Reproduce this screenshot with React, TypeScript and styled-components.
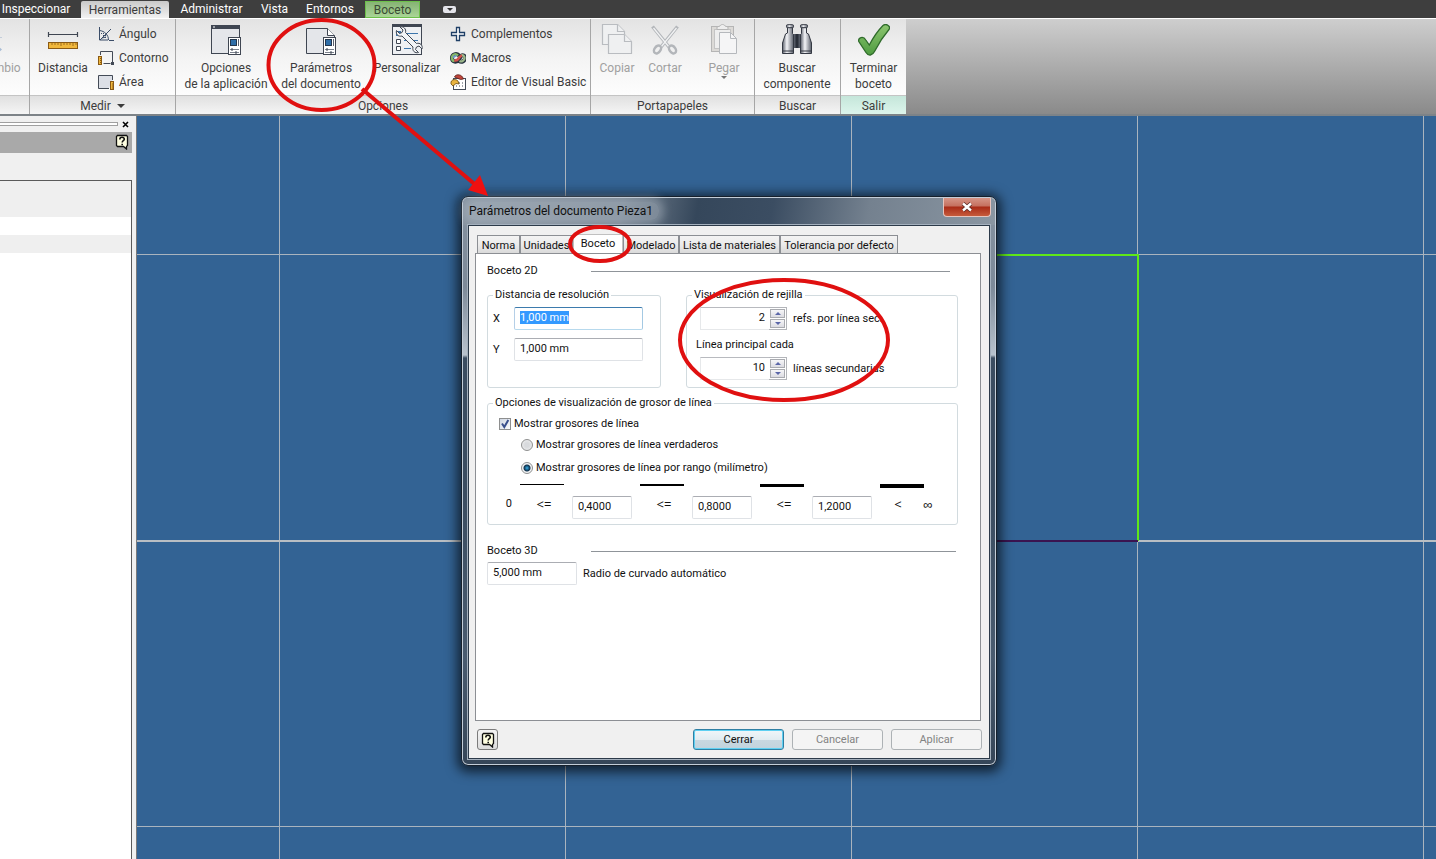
import React, { useEffect, useRef, useState } from "react";
import styled, { createGlobalStyle, css } from "styled-components";

const GlobalStyle = createGlobalStyle`
  * { box-sizing: border-box; }
  body { margin: 0; overflow: hidden; font: 12px/16px Roboto, "Open Sans", sans-serif; color: #3c3c3c; }
  button, input { font: inherit; color: inherit; margin: 0; }
  button { background: none; border: 0; padding: 0; }
`;

const Page = styled.div`
  position: relative;
  display: flex;
  flex-direction: column;
  min-height: 100vh;
  overflow: hidden;
`;

/* ---------- menu tabs ---------- */

const MenuBar = styled.nav`
  display: flex;
  align-items: flex-end;
  height: 18px;
  padding-right: 8px;
  background: #3e3e3e;
`;

const MenuTab = styled.button<{ $width: number; $look?: "active" | "context" | "first" }>`
  width: ${(p) => p.$width}px;
  height: 18px;
  padding-top: 1px;
  line-height: 17px;
  text-align: center;
  white-space: nowrap;
  color: #fff;
  ${(p) => p.$look === "first" && "padding-right: 9px;"}
  ${(p) =>
    p.$look === "active" &&
    css`
      height: 17px;
      color: #3c3c3c;
      border-radius: 2px 2px 0 0;
      background: linear-gradient(#c9c9c9, #f2f2f2);
    `}
  ${(p) =>
    p.$look === "context" &&
    css`
      height: 17px;
      color: #3a4a34;
      border: 1px solid #6cc04a;
      line-height: 15px;
      background: linear-gradient(#86b374, #a9d596);
    `}
`;

const MenuMore = styled.button`
  display: flex;
  align-items: center;
  justify-content: center;
  width: 13px;
  height: 7px;
  margin: 0 0 5px 23px;
  border-radius: 2px;
  background: #e4e4ea;
`;

/* ---------- ribbon ---------- */

const Ribbon = styled.div`
  display: flex;
  height: 98px;
  border-top: 1px solid #fff;
  border-bottom: 2px solid #7d8388;
  background: linear-gradient(#cecece, #8a8a8a);
`;

const Group = styled.section<{ $width: number }>`
  display: flex;
  flex-direction: column;
  flex: none;
  width: ${(p) => p.$width}px;
  border-right: 1px solid #a6a6a6;
  background: linear-gradient(#e3e3e3, #f4f4f4 40px, #fdfdfd 76px);
  overflow: hidden;
  &:last-child { border-right: 0; }
`;

const GroupBody = styled.div<{ $pad: number }>`
  display: flex;
  height: 76px;
  padding-left: ${(p) => p.$pad}px;
`;

const ClippedBody = styled.div`
  display: flex;
  justify-content: flex-end;
  width: 26px;
  height: 76px;
`;

const GroupTitle = styled.div<{ $green?: boolean }>`
  display: flex;
  align-items: center;
  justify-content: center;
  gap: 6px;
  height: 19px;
  padding-top: 2px;
  border-top: 1px solid #c4c4c4;
  background: ${(p) => (p.$green ? "linear-gradient(#c5e6da, #dcf5ec)" : "linear-gradient(#e0e0e0, #f5f5f5)")};
`;

const BigButton = styled.button<{ $width: number }>`
  display: flex;
  flex: none;
  flex-direction: column;
  align-items: center;
  gap: 4px;
  width: ${(p) => p.$width}px;
  padding-top: 5px;
  white-space: nowrap;
  text-align: center;
  &:disabled { color: #a0a0a0; }
  svg { flex: none; }
  span svg { display: block; margin: 0 auto; }
`;

const SmallList = styled.div<{ $gap: number }>`
  display: flex;
  flex-direction: column;
  padding-top: 3px;
  margin-left: ${(p) => p.$gap}px;
`;

const SmallButton = styled.button`
  display: flex;
  align-items: center;
  gap: 5px;
  height: 24px;
  white-space: nowrap;
`;

const Separator = styled.div`
  width: 1px;
  margin: 2px 0 2px 4px;
  background: #c2c2c2;
`;

/* ---------- workspace ---------- */

const Workspace = styled.main`
  display: flex;
  flex: 1;
`;

const Side = styled.aside`
  display: flex;
  flex: none;
  flex-direction: column;
  width: 137px;
  padding-right: 4px;
  border-right: 1px solid #7a7a7a;
  background: #f0f0f0;
`;

const SideGrip = styled.div`
  display: flex;
  align-items: center;
  justify-content: space-between;
  height: 16px;
  padding-right: 2px;
`;

const GripBar = styled.div`
  width: 118px;
  height: 4px;
  border: 1px solid #a0a0a0;
  border-left: 0;
  background: #fff;
`;

const SideClose = styled.button`
  display: flex;
  width: 9px;
  height: 9px;
`;

const SideTitle = styled.div`
  display: flex;
  align-items: center;
  justify-content: flex-end;
  height: 21px;
  padding: 0 3px 2px 0;
  background: #a9a9a9;
`;

const SideTree = styled.div`
  flex: 1;
  margin-top: 27px;
  border: 1px solid #5a5a5a;
  border-width: 1px 1px 0 0;
  background: linear-gradient(#efefef 36px, #fff 36px, #fff 54px, #efefef 54px, #efefef 72px, #fff 72px);
`;

const Canvas = styled.div`
  position: relative;
  flex: 1;
  background: #336394;
  overflow: hidden;
`;

const GridDrawing = styled.svg`
  display: block;
  width: 100%;
  height: 100%;
  position: absolute;
`;

/* ---------- dialog ---------- */

const Dialog = styled.section`
  position: absolute;
  left: 324px;
  top: 80px;
  display: flex;
  flex-direction: column;
  width: 536px;
  padding: 0 6px 6px;
  border: 1px solid #16202c;
  border-radius: 7px;
  color: #111;
  font-size: 11px;
  line-height: 14px;
  background: linear-gradient(#8592a0, #7d8a99 90px, #b8c2cd 158px, #3b4d61 161px, #3b4d61 300px, #4a5c70 460px, #364658);
  box-shadow: inset 0 0 0 1px #c3cdd8, 0 2px 12px 4px rgba(0, 0, 0, 0.65);
`;

const DialogTitle = styled.header`
  display: flex;
  align-items: flex-start;
  justify-content: space-between;
  height: 27px;
  margin: 1px -5px 0;
  padding: 0 4px 0 5px;
  border-radius: 5px 5px 0 0;
  background: linear-gradient(100deg, #8793a0, #74818f 30%, #35475b 44%, #3b4d62 58%, #74818f 76%, #8a96a2);
`;

const TitleText = styled.h1`
  margin: 4px 0 0;
  padding: 0 6px 0 1px;
  font-size: 12px;
  line-height: 18px;
  font-weight: 400;
  border-radius: 8px;
  background: rgba(185, 195, 204, 0.4);
  box-shadow: 0 0 8px 5px rgba(185, 195, 204, 0.4);
`;

const CloseButton = styled.button`
  display: flex;
  align-items: center;
  justify-content: center;
  width: 48px;
  height: 19px;
  border: 1px solid #e7c4bd;
  border-top: 0;
  border-radius: 0 0 4px 4px;
  background: linear-gradient(#d69587, #c5705f 8px, #a92b17 9px, #c65a3b);
`;

const Client = styled.div`
  display: flex;
  flex-direction: column;
  padding: 8px 7px 8px 6px;
  border: 1px solid #2c3a49;
  box-shadow: 0 0 0 1px #a4b0bd;
  background: #f0f0f0;
`;

const TabStrip = styled.div`
  display: flex;
  align-items: flex-end;
  height: 19px;
  padding-left: 2px;
`;

const Tab = styled.button<{ $width: number; $active?: boolean }>`
  flex: none;
  width: ${(p) => p.$width}px;
  height: 18px;
  padding-top: 2px;
  border: 1px solid #8c8f94;
  border-bottom: 0;
  white-space: nowrap;
  line-height: 16px;
  background: linear-gradient(#f3f3f3, #ebebeb 50%, #dadada);
  ${(p) =>
    p.$active &&
    css`
      height: 19px;
      padding: 0 0 1px;
      background: #fff;
      border-color: #c0c0c0;
    `}
`;

const TabPanel = styled.div`
  min-height: 468px;
  margin-right: 1px;
  padding: 9px 22px 0 11px;
  border: 1px solid #8c8f94;
  background: #fff;
`;

const SectionTitle = styled.h2<{ $end: number }>`
  display: grid;
  grid-template-columns: 104px 1fr;
  align-items: center;
  height: 16px;
  margin: 0;
  padding-right: ${(p) => p.$end}px;
  font-size: 11px;
  font-weight: 400;
  &::after {
    content: "";
    height: 1px;
    background: #8f9499;
  }
`;

const PairRow = styled.div`
  display: flex;
  gap: 25px;
  margin-top: 9px;
`;

const FieldGroup = styled.fieldset<{ $width?: number; $height: number }>`
  ${(p) => (p.$width ? `width: ${p.$width}px;` : "flex: 1;")}
  min-width: 0;
  height: ${(p) => p.$height}px;
  margin: 0;
  padding: 5px 5px 0;
  border: 1px solid #d2dbdf;
  border-radius: 3px;
  legend {
    height: 14px;
    margin-left: 0;
    padding: 0 2px;
  }
`;

const FieldRow = styled.div`
  display: grid;
  grid-template-columns: 21px 129px;
  align-items: center;
  margin-bottom: 8px;
`;

const TextBox = styled.input<{ $width: number; $focus?: boolean }>`
  width: ${(p) => p.$width}px;
  height: 23px;
  padding: 0 5px 2px;
  border: 1px solid #dfe2e6;
  border-top-color: #abadb3;
  border-radius: 2px;
  background: #fff;
  outline: 0;
  &::selection { color: #fff; background: #3399ff; }
  ${(p) => p.$focus && "border-color: #3d7bad #a4c9e3 #b7d9ed #b5cfe7;"}
`;

const SpinRow = styled.div`
  display: flex;
  align-items: center;
  gap: 6px;
  padding-left: 8px;
`;

const SpinBox = styled.div`
  display: flex;
  width: 87px;
  height: 23px;
`;

const SpinInput = styled.input`
  width: 69px;
  padding: 0 4px 2px;
  border: 1px solid #e6e8ea;
  border-top-color: #b8babf;
  border-right: 0;
  text-align: right;
  outline: 0;
`;

const SpinButtons = styled.div`
  display: flex;
  flex-direction: column;
  width: 18px;
  padding: 1px;
  gap: 1px;
  border: 1px solid #b3b5ba;
  border-left: 0;
  button {
    display: flex;
    flex: 1;
    align-items: center;
    justify-content: center;
    border: 1px solid #a9abb0;
    background: linear-gradient(#f6f6f8, #dcdce2);
  }
`;

const SpinCaption = styled.label`
  display: flex;
  align-items: center;
  height: 27px;
  padding: 2px 0 0 4px;
`;

const ChoiceRow = styled.label<{ $indent: number; $top: number }>`
  display: flex;
  align-items: center;
  gap: 3px;
  height: 16px;
  margin-top: ${(p) => p.$top}px;
  padding-left: ${(p) => p.$indent}px;
`;

const CheckInput = styled.input`
  appearance: none;
  width: 12px;
  height: 12px;
  border: 1px solid #8e8f8f;
  background: linear-gradient(135deg, #cfd6e2, #fafbfc);
  &:checked {
    background: url("data:image/svg+xml,%3Csvg xmlns='http://www.w3.org/2000/svg' viewBox='0 0 10 10'%3E%3Cpath d='M2 4.5L4.3 8L8.3 1' fill='none' stroke='%23394f8c' stroke-width='2'/%3E%3C/svg%3E"),
      linear-gradient(135deg, #cfd6e2, #fafbfc);
  }
`;

const RadioInput = styled.input`
  appearance: none;
  width: 12px;
  height: 12px;
  border: 1px solid #8e8f8f;
  border-radius: 50%;
  background: radial-gradient(circle, #d8dadd 30%, #f4f4f4);
  &:checked {
    background: radial-gradient(circle at 50% 50%, #3fb1e6 0, #14567f 2px, #16324a 3px, #f2f4f6 4px);
  }
`;

const Ranges = styled.div`
  display: flex;
  gap: 4px;
  margin-top: 8px;
`;

const RangeStart = styled.span`
  flex: none;
  width: 19px;
  padding-top: 12px;
  line-height: 16px;
  text-align: right;
`;

const RangeStep = styled.div<{ $last?: boolean }>`
  display: grid;
  flex: none;
  grid-template-columns: ${(p) => (p.$last ? "44px 16px" : "56px 60px")};
  grid-template-rows: 12px 23px;
  line-height: 16px;
  text-align: center;
`;

const RangeSign = styled.span`
  font-size: 13px;
  font-family: "Noto Sans", sans-serif;
`;

const Weight = styled.div<{ $size: number }>`
  grid-column: 1 / -1;
  width: 44px;
  height: ${(p) => p.$size}px;
  margin-left: 4px;
  background: #000;
`;

const RadiusRow = styled.div`
  display: flex;
  align-items: center;
  gap: 6px;
  margin-top: 3px;
`;

const Spacer = styled.div<{ $size: number }>`
  height: ${(p) => p.$size}px;
`;

const Footer = styled.footer`
  display: flex;
  gap: 8px;
  margin-top: 8px;
  padding-left: 2px;
`;

const HelpButton = styled.button`
  display: flex;
  align-items: center;
  justify-content: center;
  width: 21px;
  height: 21px;
  margin-right: auto;
  border: 1px solid #7b7b7b;
  border-radius: 3px;
  background: linear-gradient(#f4f4f4, #dcdcdc);
`;

const PushButton = styled.button<{ $default?: boolean }>`
  width: 91px;
  height: 21px;
  padding-top: 1px;
  border: 1px solid #adb2b5;
  border-radius: 3px;
  background: #f4f4f4;
  &:disabled { color: #838383; }
  ${(p) =>
    p.$default &&
    css`
      border-color: #2f7fa3;
      box-shadow: inset 0 0 0 1px #5fd0f2;
      background: linear-gradient(#f0f6f9, #e2ecf1 50%, #c8d8e1 50%, #c2d3dd);
    `}
`;

const Annotations = styled.svg`
  position: absolute;
  left: 0;
  top: 0;
  pointer-events: none;
`;

/* ---------- icons ---------- */

const Mini = ({ children }: { children: React.ReactNode }) => (
  <svg width="16" height="16" viewBox="0 0 16 16" fill="none">{children}</svg>
);
const Large = ({ children }: { children: React.ReactNode }) => (
  <svg width="32" height="32" viewBox="0 0 32 32" fill="none">{children}</svg>
);

const HelpGlyph = () => (
  <svg width="14" height="16" viewBox="0 0 14 16" fill="none">
    <path d="M2.5 1.5h9l1 1v9l-1 1v2.5l-3-2.5h-6l-1-1v-9z" fill="#ffffe1" stroke="#111" strokeWidth="1.3" />
    <path d="M4.8 5.5c0-3 4.7-2.8 4.5-.2C9.2 6.7 7.2 6.8 7.2 8.5M7.2 9.8v1.4" stroke="#111" strokeWidth="1.6" />
  </svg>
);

const IconDistance = () => (
  <Large>
    <path d="M1.5 8v5M30.5 8v5M2 10.5h28" stroke="#3f4652" strokeWidth="1.2" />
    <rect x="1.5" y="18.5" width="29" height="6" fill="#f0b73c" stroke="#8a5a14" />
    <path d="M5 19v2M8 19v2M11 19v2M14 19v3M17 19v2M20 19v2M23 19v2M26 19v3M29 19v2" stroke="#8a5a14" strokeWidth=".8" />
  </Large>
);
const IconAngle = () => (
  <Mini>
    <path d="M1.5 1v13H10M1.5 4.5C6.5 5 10.5 9 10.5 14M2 14L13 3" stroke="#3b4d68" />
    <path d="M11 14.5h5" stroke="#3b4d68" />
    <path d="M3.5 7v1M5.5 7v1M5.5 9v1M7.5 9v1M7.5 11v1M4 12l4-1" stroke="#3b4d68" />
  </Mini>
);
const IconContour = () => (
  <Mini>
    <path d="M2.5 5V1.5h12v12M5.5 13.5h7" stroke="#444b57" />
    <rect x="13" y="12" width="3" height="3" fill="#444b57" />
    <rect x=".5" y="6.5" width="3" height="8" fill="#f0b73c" stroke="#8a5a14" />
    <path d="M2 8.5h1.5M2 10.5h1.5M2 12.5h1.5" stroke="#8a5a14" />
  </Mini>
);
const IconArea = () => (
  <Mini>
    <path d="M11 14.5H.5V1.5h14V6" fill="#dcdfe6" stroke="#444b57" />
    <rect x="12.5" y="7.5" width="3" height="8" fill="#f0b73c" stroke="#8a5a14" />
    <path d="M14 10h1.5M14 12h1.5M14 14h1.5" stroke="#8a5a14" />
  </Mini>
);
const SettingsSheet = () => (
  <>
    <rect x="18.5" y="13.5" width="12" height="17" fill="#fff" stroke="#3f4652" />
    <rect x="20.5" y="15.5" width="6" height="6" fill="#2e6ea8" stroke="#23364d" />
    <path d="M28.5 15v7" stroke="#5b6370" />
    <path d="M20 25.5h9M20 28.5h9" stroke="#7a818c" />
    <path d="M22 24v3M26 27v3" stroke="#3f4652" />
  </>
);
const IconAppOptions = () => (
  <Large>
    <rect x="1.5" y="1.5" width="28" height="28" fill="#e4e6ea" stroke="#3f4652" />
    <path d="M1 3h29" stroke="#3f4652" strokeWidth="4" />
    <path d="M3 3h2" stroke="#fff" />
    <SettingsSheet />
  </Large>
);
const IconDocSettings = () => (
  <Large>
    <path d="M1.5 4.5h21l7 7v18h-28z" fill="#e4e6ea" stroke="#3f4652" />
    <path d="M22.5 4.5v7h7" fill="#fff" stroke="#3f4652" />
    <SettingsSheet />
  </Large>
);
const IconCustomize = () => (
  <Large>
    <rect x="1.5" y=".5" width="29" height="30" fill="#eef0f3" stroke="#3f4652" />
    <path d="M1 2h30" stroke="#3f4652" strokeWidth="2" />
    <rect x="5.5" y="7.5" width="4" height="4" fill="#3d76ad" stroke="#3d76ad" />
    <path d="M5.5 15.5h4v4h-4zM5.5 22.5h4v4h-4z" fill="#fff" stroke="#3f4652" />
    <path d="M13 9.5h14M13 16.5h14M13 24.5h7" stroke="#3d76ad" />
    <path
      d="M9 3l3 3-1 2.500-2.500 1-3-3c-1 4 2 6.500 5.500 5.500L22 23c-1 4 2 6.500 5.500 5.500l-3-3 1-2.500 2.500-1 3 3c1-4-2-6.500-5.500-5.500L14.500 8.500C15.500 5 12.500 2 9 3z"
      fill="#f2f4f6"
      stroke="#3f4652"
    />
  </Large>
);
const IconPlus = () => (
  <Mini><path d="M6.5 1.5h3v5h5v3h-5v5h-3v-5h-5v-3h5z" fill="#fff" stroke="#1f3f66" strokeWidth="1.3" /></Mini>
);
const IconMacros = () => (
  <Mini>
    <path d="M9 5.5C6.5 3 2 4 2 8s4.5 5 7 1.5L11 6c2-1.5 4-.5 4 2s-3 5-6 3" stroke="#26323f" strokeWidth="4" />
    <path d="M8 5.5C5.500 3 2 4.5 2 8c0 2 1 3 2.5 3" stroke="#86b86b" strokeWidth="2.4" />
    <path d="M11 5.5c2-1 3.5.5 3.5 2.5 0 3-3 4-5 3" stroke="#9db88b" strokeWidth="2.4" />
    <path d="M4.5 10c4 2 3.5-3.5 7.5-4.5" stroke="#d2504a" strokeWidth="2.6" />
    <path d="M3 7.5l3-2" stroke="#6d9bd0" strokeWidth="2" />
  </Mini>
);
const IconVba = () => (
  <Mini>
    <rect x="3.5" y="4.5" width="12" height="11" fill="#fff" stroke="#444b57" />
    <path d="M6 12h1M9 9h1M12 9h1M9 12h1M12 12h1" stroke="#444b57" />
    <path d="M4.5 3c1-3 6-3 8 0l1 2-3 .5z" fill="#c0453a" stroke="#5a1d18" strokeWidth=".8" />
    <path d="M1 8c1-3 5-3 7-1l1 3-3-.5L3 12 1 10z" fill="#e9b440" stroke="#6b4a10" strokeWidth=".8" />
  </Mini>
);
const IconCopy = () => (
  <Large>
    <g fill="#eff0f1" stroke="#b9bcc0" strokeWidth="1.2">
      <path d="M1.5.5h15l7 7v13h-22z" /><path d="M16.5.5v7h7" />
      <path d="M7.5 10.5h16l7 7v12h-23z" /><path d="M23.5 10.5v7h7" />
    </g>
  </Large>
);
const IconCut = () => (
  <Large>
    <path d="M3.5 2.5L20 23M28.5 2.5L12 23" stroke="#b3b6ba" strokeWidth="3.5" />
    <path d="M4.5 4L20 23M27.5 4L12 23" stroke="#f1f2f3" strokeWidth="1.3" />
    <g stroke="#b3b6ba" strokeWidth="2.5">
      <ellipse cx="8.5" cy="25.5" rx="3" ry="4.3" transform="rotate(38 8.5 25.5)" />
      <ellipse cx="23.5" cy="25.5" rx="3" ry="4.3" transform="rotate(-38 23.5 25.5)" />
    </g>
  </Large>
);
const IconPaste = () => (
  <Large>
    <rect x="3.5" y="2.5" width="22" height="25" fill="#dcdad7" stroke="#b5b5b5" />
    <rect x="6.5" y="5.5" width="16" height="19" fill="#eee" stroke="#c4c4c4" />
    <path d="M9 5.5V3l3-1c1-2 4-2 5 0l3 1v2.5z" fill="#eee" stroke="#b5b5b5" />
    <path d="M11.5 8.5h11l6 6v15h-17z" fill="#f5f5f6" stroke="#b5b8bc" />
    <path d="M22.5 8.5v6h6" stroke="#b5b8bc" />
  </Large>
);
const IconBinoculars = () => (
  <Large>
    <defs>
      <linearGradient id="steel"><stop stopColor="#5b606b" /><stop offset=".4" stopColor="#f4f5f8" /><stop offset="1" stopColor="#5b606b" /></linearGradient>
      <linearGradient id="hinge"><stop stopColor="#8a909c" /><stop offset=".5" stopColor="#20252f" /><stop offset="1" stopColor="#8a909c" /></linearGradient>
    </defs>
    <rect x="11" y="10" width="10" height="14" fill="url(#hinge)" />
    <g fill="url(#steel)" stroke="#343943">
      <path d="M6.5 3.5h5v6l1 1v19h-11V19l3-9 2-1z" /><path d="M20.5 3.5h5V9l2 1 3 9v10.5h-11v-19l1-1z" />
      <rect x="5.5" y=".7" width="7" height="3" rx="1" /><rect x="19.5" y=".7" width="7" height="3" rx="1" />
    </g>
    <path d="M2 27h11M19 27h11" stroke="#343943" />
  </Large>
);
const IconCheck = () => (
  <Large>
    <defs><linearGradient id="leaf" x2="0" y2="1"><stop stopColor="#8cc56f" /><stop offset="1" stopColor="#4f9c41" /></linearGradient></defs>
    <path d="M.8 17.5c-1-4 4.500-6 7-1.500l3.500 5C15 14 20 6.500 25 1.500c3.500-2.500 8 1 6 4-6 7-10.500 14-14.500 22-2 4-6 5-8.500 1z" fill="url(#leaf)" stroke="#2f6b2b" strokeWidth="1.3" />
  </Large>
);
const IconExchange = () => (
  <Large><path d="M0 13.5h18" stroke="#c3cdda" /><path d="M10 25.5h5" stroke="#a9bdd6" strokeWidth="3" /><path d="M13 21l5 4.5-5 4.5z" fill="#a9bdd6" /></Large>
);
const Triangle = ({ size, color, up }: { size: number; color: string; up?: boolean }) => (
  <svg width={size} height={size / 2} viewBox="0 0 8 4"><path d={up ? "M0 4h8L4 0z" : "M0 0h8L4 4z"} fill={color} /></svg>
);

const Spinner = ({ id, initial, label }: { id: string; initial: number; label: string }) => {
  const [value, setValue] = useState(initial);
  return (
    <SpinRow>
      <SpinBox>
        <SpinInput id={id} value={value} onChange={(e) => setValue(Number(e.target.value) || 0)} />
        <SpinButtons>
          <button aria-label="Aumentar" onClick={() => setValue(value + 1)}><Triangle size={6} color="#5a66a8" up /></button>
          <button aria-label="Disminuir" onClick={() => setValue(value - 1)}><Triangle size={6} color="#5a66a8" /></button>
        </SpinButtons>
      </SpinBox>
      <label htmlFor={id}>{label}</label>
    </SpinRow>
  );
};

const ranges = [
  { size: 1, sign: "<=", value: "0,4000" },
  { size: 2, sign: "<=", value: "0,8000" },
  { size: 3, sign: "<=", value: "1,2000" },
  { size: 4, sign: "<" },
];

const SettingsDialog = () => {
  const first = useRef<HTMLInputElement>(null);
  useEffect(() => {
    first.current?.focus();
    first.current?.select();
  }, []);
  return (
    <Dialog role="dialog" aria-labelledby="dialog-title">
      <DialogTitle>
        <TitleText id="dialog-title">Parámetros del documento Pieza1</TitleText>
        <CloseButton aria-label="Cerrar ventana">
          <svg width="12" height="10" viewBox="0 0 12 10"><path d="M2 1.5L10 8.5M10 1.5L2 8.5" stroke="#5a2a24" strokeWidth="4" /><path d="M2 1.5L10 8.5M10 1.5L2 8.5" stroke="#fff" strokeWidth="2.4" /></svg>
        </CloseButton>
      </DialogTitle>
      <Client>
        <TabStrip role="tablist">
          <Tab role="tab" $width={43}>Norma</Tab>
          <Tab role="tab" $width={53}>Unidades</Tab>
          <Tab role="tab" $width={50} $active aria-selected>Boceto</Tab>
          <Tab role="tab" $width={56}>Modelado</Tab>
          <Tab role="tab" $width={101}>Lista de materiales</Tab>
          <Tab role="tab" $width={118}>Tolerancia por defecto</Tab>
        </TabStrip>
        <TabPanel role="tabpanel">
          <SectionTitle $end={8}>Boceto 2D</SectionTitle>
          <PairRow>
            <FieldGroup $width={174} $height={100}>
              <legend>Distancia de resolución</legend>
              <FieldRow>
                <label htmlFor="res-x">X</label>
                <TextBox id="res-x" ref={first} $width={129} $focus defaultValue="1,000 mm" />
              </FieldRow>
              <FieldRow>
                <label htmlFor="res-y">Y</label>
                <TextBox id="res-y" $width={129} defaultValue="1,000 mm" />
              </FieldRow>
            </FieldGroup>
            <FieldGroup $height={100}>
              <legend>Visualización de rejilla</legend>
              <Spinner id="snaps" initial={2} label="refs. por línea sec." />
              <SpinCaption htmlFor="major">Línea principal cada</SpinCaption>
              <Spinner id="major" initial={10} label="líneas secundarias" />
            </FieldGroup>
          </PairRow>
          <Spacer $size={8} />
          <FieldGroup $width={471} $height={129}>
            <legend>Opciones de visualización de grosor de línea</legend>
            <ChoiceRow $indent={6} $top={1}>
              <CheckInput type="checkbox" defaultChecked />Mostrar grosores de línea
            </ChoiceRow>
            <ChoiceRow $indent={28} $top={5}>
              <RadioInput type="radio" name="weights" />Mostrar grosores de línea verdaderos
            </ChoiceRow>
            <ChoiceRow $indent={28} $top={7}>
              <RadioInput type="radio" name="weights" defaultChecked />Mostrar grosores de línea por rango (milímetro)
            </ChoiceRow>
            <Ranges>
              <RangeStart>0</RangeStart>
              {ranges.map((r) => (
                <RangeStep key={r.size} $last={!r.value}>
                  <Weight $size={r.size} />
                  <RangeSign>{r.sign}</RangeSign>
                  {r.value ? <TextBox $width={60} defaultValue={r.value} aria-label="Grosor" /> : <RangeSign>∞</RangeSign>}
                </RangeStep>
              ))}
            </Ranges>
          </FieldGroup>
          <Spacer $size={18} />
          <SectionTitle $end={2}>Boceto 3D</SectionTitle>
          <RadiusRow>
            <TextBox id="radius" $width={90} defaultValue="5,000 mm" />
            <label htmlFor="radius">Radio de curvado automático</label>
          </RadiusRow>
        </TabPanel>
        <Footer>
          <HelpButton aria-label="Ayuda"><HelpGlyph /></HelpButton>
          <PushButton $default>Cerrar</PushButton>
          <PushButton disabled>Cancelar</PushButton>
          <PushButton disabled>Aplicar</PushButton>
        </Footer>
      </Client>
    </Dialog>
  );
};

export default function App() {
  return (
    <Page>
      <GlobalStyle />
      <MenuBar>
        <MenuTab $width={81} $look="first">Inspeccionar</MenuTab>
        <MenuTab $width={88} $look="active">Herramientas</MenuTab>
        <MenuTab $width={85}>Administrar</MenuTab>
        <MenuTab $width={41}>Vista</MenuTab>
        <MenuTab $width={70}>Entornos</MenuTab>
        <MenuTab $width={55} $look="context">Boceto</MenuTab>
        <MenuMore aria-label="Más"><Triangle size={6} color="#333" /></MenuMore>
      </MenuBar>
      <Ribbon>
        <Group $width={30}>
          <ClippedBody>
            <BigButton $width={52} disabled><IconExchange />Cambio</BigButton>
          </ClippedBody>
          <GroupTitle />
        </Group>
        <Group $width={146}>
          <GroupBody $pad={4}>
            <BigButton $width={58}><IconDistance />Distancia</BigButton>
            <SmallList $gap={6}>
              <SmallButton><IconAngle />Ángulo</SmallButton>
              <SmallButton><IconContour />Contorno</SmallButton>
              <SmallButton><IconArea />Área</SmallButton>
            </SmallList>
          </GroupBody>
          <GroupTitle>Medir <Triangle size={8} color="#3c3c3c" /></GroupTitle>
        </Group>
        <Group $width={415}>
          <GroupBody $pad={4}>
            <BigButton $width={92}><IconAppOptions /><span>Opciones<br />de la aplicación</span></BigButton>
            <BigButton $width={98}><IconDocSettings /><span>Parámetros<br />del documento</span></BigButton>
            <BigButton $width={74}><IconCustomize />Personalizar</BigButton>
            <SmallList $gap={6}>
              <SmallButton><IconPlus />Complementos</SmallButton>
              <SmallButton><IconMacros />Macros</SmallButton>
              <SmallButton><IconVba />Editor de Visual Basic</SmallButton>
            </SmallList>
          </GroupBody>
          <GroupTitle>Opciones</GroupTitle>
        </Group>
        <Group $width={164}>
          <GroupBody $pad={2}>
            <BigButton $width={48} disabled><IconCopy />Copiar</BigButton>
            <BigButton $width={48} disabled><IconCut />Cortar</BigButton>
            <Separator />
            <BigButton $width={62} disabled><IconPaste /><span>Pegar<Triangle size={6} color="#777" /></span></BigButton>
          </GroupBody>
          <GroupTitle>Portapapeles</GroupTitle>
        </Group>
        <Group $width={86}>
          <GroupBody $pad={0}>
            <BigButton $width={84}><IconBinoculars /><span>Buscar<br />componente</span></BigButton>
          </GroupBody>
          <GroupTitle>Buscar</GroupTitle>
        </Group>
        <Group $width={65}>
          <GroupBody $pad={0}>
            <BigButton $width={65}><IconCheck /><span>Terminar<br />boceto</span></BigButton>
          </GroupBody>
          <GroupTitle $green>Salir</GroupTitle>
        </Group>
      </Ribbon>
      <Workspace>
        <Side>
          <SideGrip>
            <GripBar />
            <SideClose aria-label="Cerrar panel">
              <svg width="9" height="9" viewBox="0 0 9 9"><path d="M2 2l5 5M7 2L2 7" stroke="#000" strokeWidth="1.6" /></svg>
            </SideClose>
          </SideGrip>
          <SideTitle><HelpGlyph /></SideTitle>
          <SideTree />
        </Side>
        <Canvas>
          <GridDrawing>
            <path d="M142.5 0v2000M428.5 0v2000M714.5 0v2000M1000.5 0v2000M1286.5 0v2000M0 138.5h3000M0 710.5h3000" stroke="#aab4be" />
            <path d="M0 425h3000" stroke="#b9bec3" strokeWidth="2" />
            <path d="M715 139h286v286" fill="none" stroke="#5fe818" strokeWidth="2" />
            <path d="M715 425h286" stroke="#3a1450" strokeWidth="2" />
          </GridDrawing>
          <SettingsDialog />
        </Canvas>
      </Workspace>
      <Annotations width="1000" height="500" fill="none" stroke="#e01010" strokeWidth="4">
        <ellipse cx="321.5" cy="65" rx="53" ry="45" />
        <path d="M362 89L478 187" />
        <path d="M488 196l-20-6 12-15z" fill="#f01010" stroke="none" />
        <ellipse cx="600" cy="244" rx="30" ry="17" />
        <ellipse cx="784" cy="340" rx="104" ry="60" />
      </Annotations>
    </Page>
  );
}
